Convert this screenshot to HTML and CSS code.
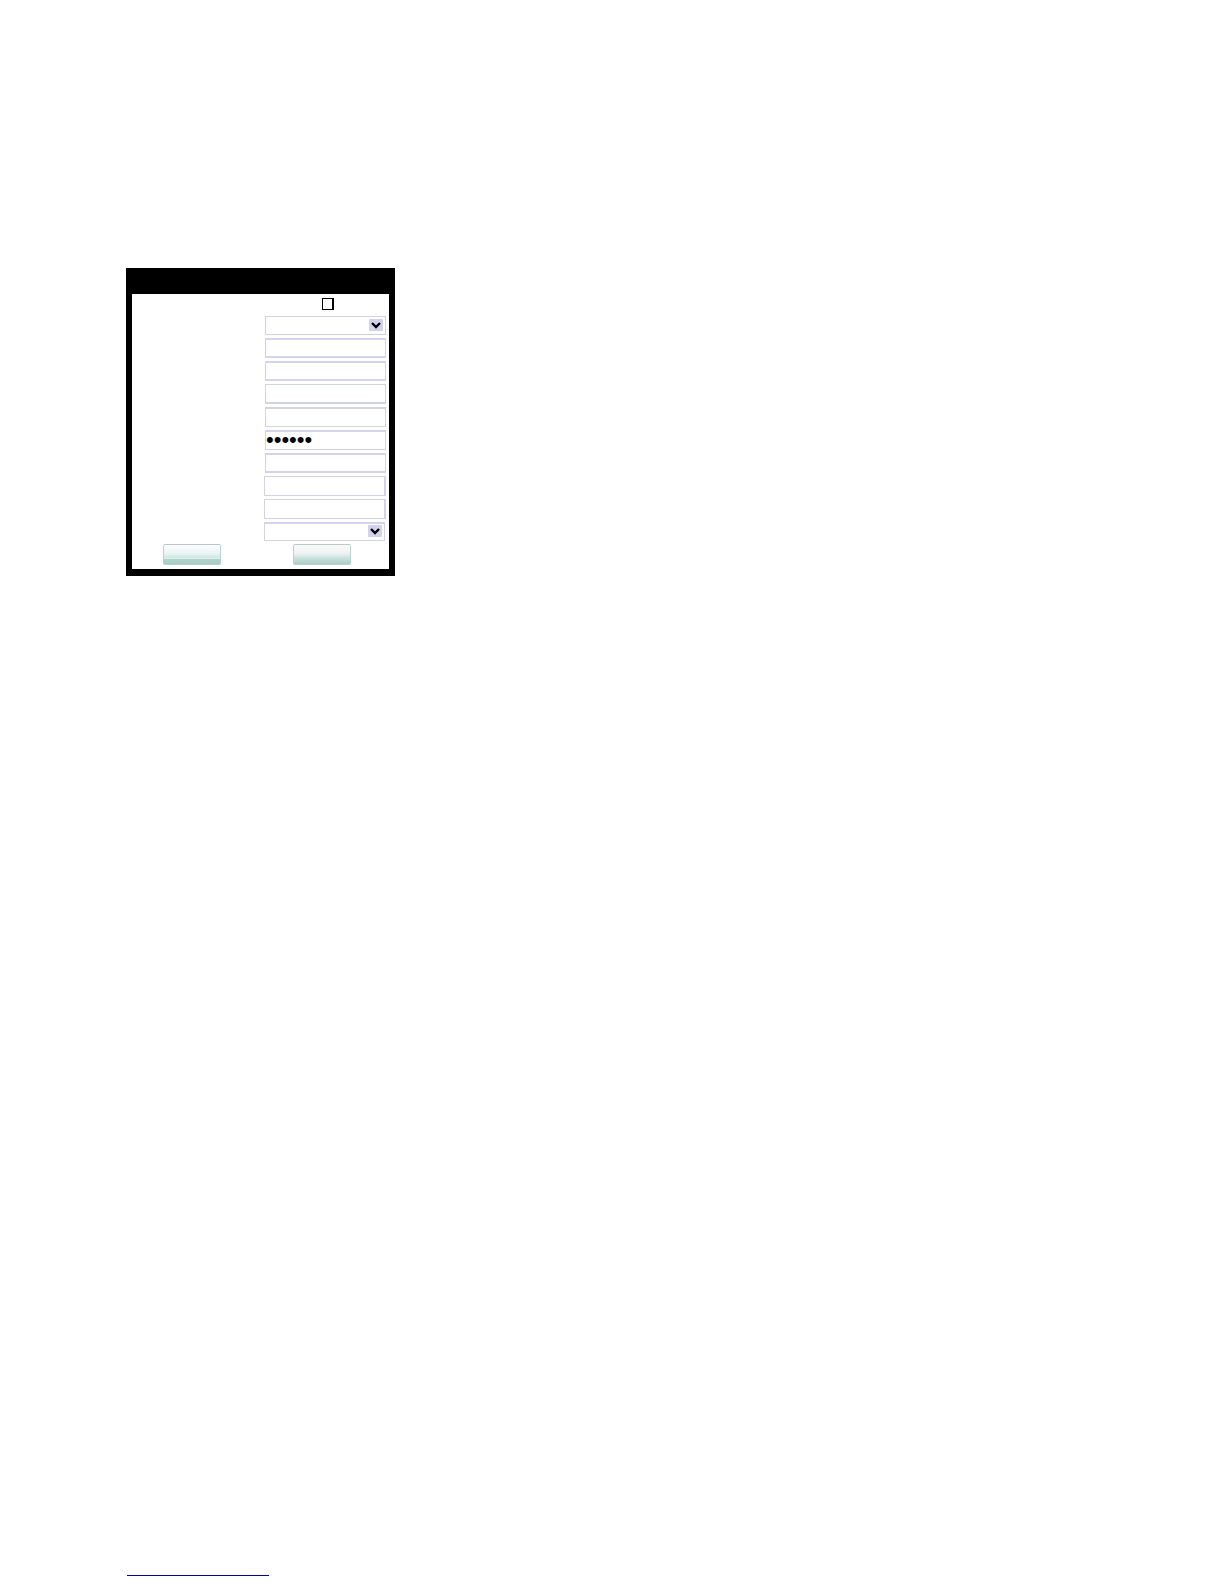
FILE: index.html
```html
<!DOCTYPE html>
<html lang="en">
<head>
<meta charset="utf-8">
<meta name="viewport" content="width=device-width, initial-scale=1">
<title>Settings</title>
<link rel="stylesheet" href="styles.css">
</head>
<body>
<main class="content">
  <form class="panel">
    <div class="panel-head"></div>
    <div class="panel-body">
      <div class="check-row"><input class="check" type="checkbox" aria-label="Enable"></div>
      <div class="fields">
        <div class="picker">
          <select class="field" aria-label="Type"><option></option></select>
          <svg class="arrow" viewBox="0 0 14 12" aria-hidden="true"><path d="M3 4 7 8l4-4"/></svg>
        </div>
        <input class="field top bottom" type="text" aria-label="Field 1">
        <input class="field top bottom" type="text" aria-label="Field 2">
        <input class="field bottom grey" type="text" aria-label="Field 3">
        <input class="field top grey" type="text" aria-label="Field 4">
        <input class="field password top" type="password" value="secret" aria-label="Password">
        <input class="field top bottom" type="text" aria-label="Field 5">
        <input class="field side" type="text" aria-label="Field 6">
        <input class="field side" type="text" aria-label="Field 7">
        <div class="picker outdent">
          <select class="field top" aria-label="Mode"><option></option></select>
          <svg class="arrow" viewBox="0 0 14 12" aria-hidden="true"><path d="M3 4 7 8l4-4"/></svg>
        </div>
      </div>
      <div class="actions">
        <div><button class="button" type="button" aria-label="Save"></button></div>
        <div><button class="button smooth" type="button" aria-label="Cancel"></button></div>
      </div>
    </div>
  </form>
</main>
<footer class="footer"><a class="footer-link" href="#" aria-label="Website"></a></footer>
</body>
</html>
```
FILE: styles.css
```css
* { box-sizing: border-box; }

body {
  margin: 0;
  min-height: 100vh;
  display: flex;
  flex-direction: column;
  background: #fff;
  font-family: "Liberation Sans", Arial, sans-serif;
}

.content {
  flex: 1;
  padding: 268px 126px 40px;
}

.panel {
  max-width: 269px;
  padding: 0 6px 7px;
  background: #000;
}

.panel-head { height: 26px; }

.panel-body {
  padding: 4px 3px 4px;
  background: #fff;
}

.check-row {
  display: flex;
  height: 18px;
  padding-left: 187px;
}

.check {
  appearance: none;
  width: 12px;
  height: 12px;
  margin: 0;
  border: 1px solid #000;
  border-right-width: 2px;
  background: #fff;
}

.fields {
  display: flex;
  flex-direction: column;
  gap: 3px;
  margin-left: 130px;
}

.field {
  appearance: none;
  width: 100%;
  height: 20px;
  margin: 0;
  padding: 0 1px;
  border: 1px solid #d2d2e6;
  border-radius: 0;
  background: #fefffe;
  color: #000;
  font: 16px/16px "Liberation Sans", Arial, sans-serif;
}

.field.top { border-top: 2px solid #d3d3ee; }
.field.bottom { border-bottom: 2px solid #d3d3ee; }
.field.grey { border-color: #d0d4de; }

.field.password {
  padding: 0 0 2px;
  font-size: 22px;
}

.field.side {
  width: 122px;
  margin-left: -1px;
  border-right: 2px solid #d3d3ee;
}

.picker {
  display: grid;
  height: 19px;
}

.picker > * { grid-area: 1 / 1; }
.picker .field { height: 19px; }

.outdent {
  margin-left: -1px;
  margin-right: 1px;
}

.arrow {
  justify-self: end;
  width: 14px;
  height: 12px;
  margin: 3px 3px 0 0;
  border-radius: 1px;
  background: #d2d2ec;
  pointer-events: none;
}

.arrow path {
  fill: none;
  stroke: #000;
  stroke-width: 2.4;
}

.actions {
  display: grid;
  grid-template-columns: 130px 1fr;
  margin-top: 3px;
  padding-left: 28px;
}

.button {
  display: block;
  width: 58px;
  height: 21px;
  padding: 0;
  border: 1px solid #b9d3ce;
  border-top-color: #bcc8c6;
  border-radius: 2px;
  background: linear-gradient(#fbfdfc, #e9f4f2 45%, #d0e8e3 65%, #e1f1ed 72%, #aed2ca 76%, #a6cdc4);
}

.button.smooth { background: linear-gradient(#f7f9f8, #eef3f2 45%, #cfe5e0 65%, #a9cdc5); }

.footer {
  padding: 0 127px 8px;
}

.footer-link {
  display: block;
  max-width: 142px;
  height: 16px;
  border-bottom: 1px solid #0000a0;
}
```
